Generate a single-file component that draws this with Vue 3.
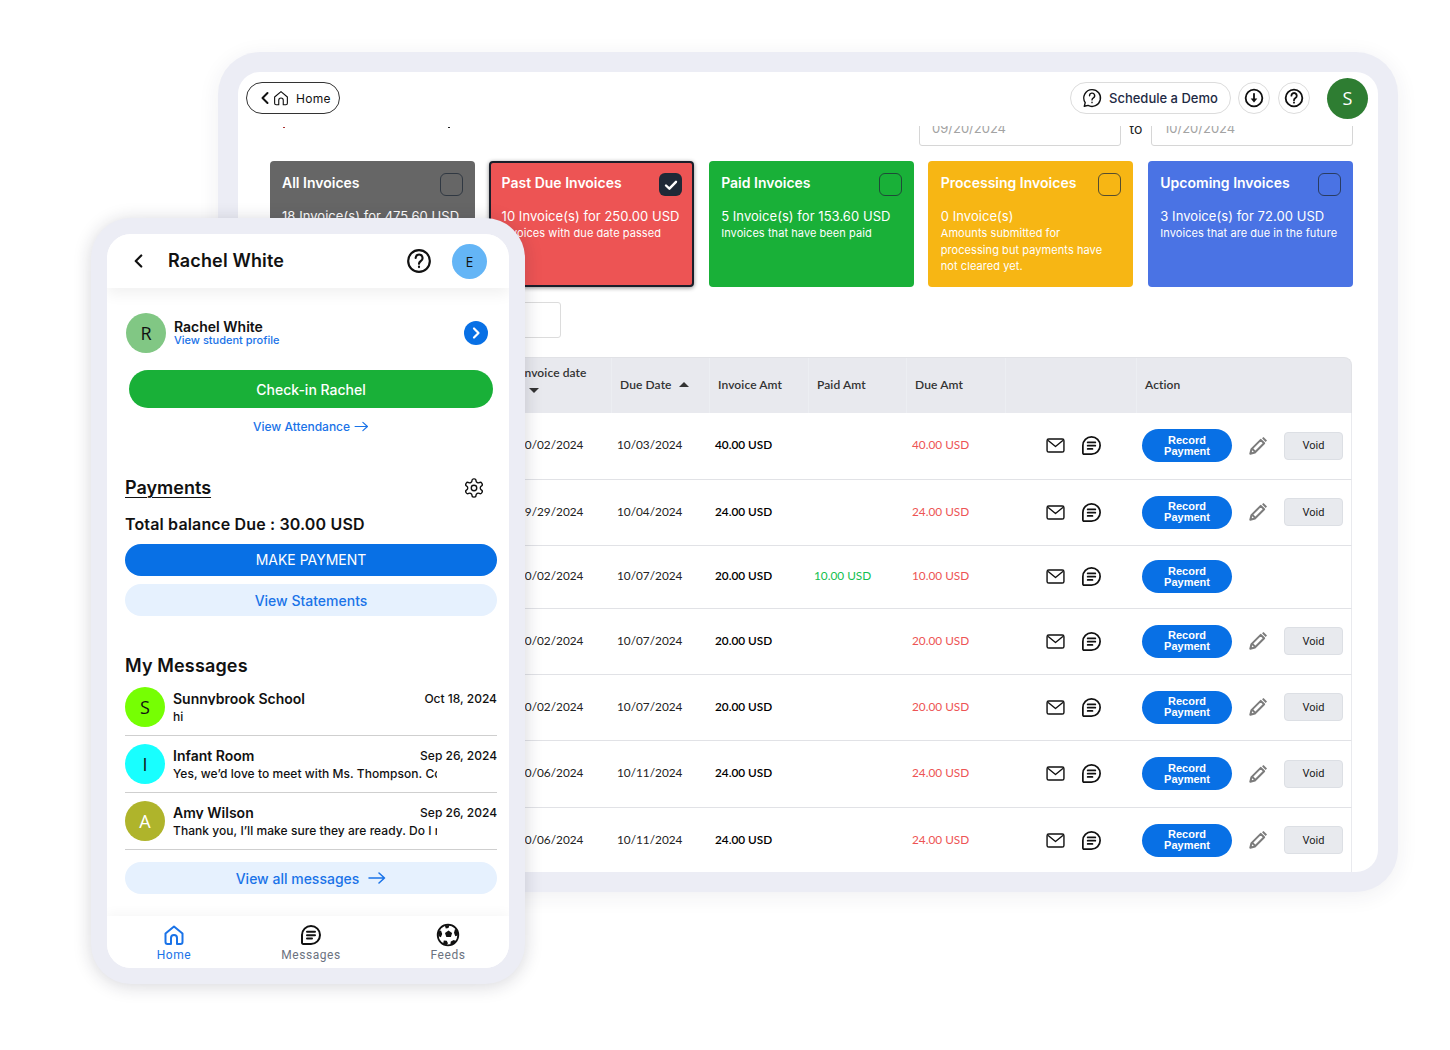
<script setup>
const cards = [
  { title: 'All Invoices', count: '18 Invoice(s) for 475.60 USD', sub: 'All invoices', color: 'c-grey' },
  { title: 'Past Due Invoices', count: '10 Invoice(s) for 250.00 USD', sub: 'Invoices with due date passed', color: 'c-red', checked: true },
  { title: 'Paid Invoices', count: '5 Invoice(s) for 153.60 USD', sub: 'Invoices that have been paid', color: 'c-green' },
  { title: 'Processing Invoices', count: '0 Invoice(s)', sub: 'Amounts submitted for processing but payments have not cleared yet.', color: 'c-yellow' },
  { title: 'Upcoming Invoices', count: '3 Invoice(s) for 72.00 USD', sub: 'Invoices that are due in the future', color: 'c-blue' }
]
const rows = [
  { inv: '10/02/2024', due: '10/03/2024', amt: '40.00 USD', paid: '', bal: '40.00 USD', h: 66.5, edit: true },
  { inv: '09/29/2024', due: '10/04/2024', amt: '24.00 USD', paid: '', bal: '24.00 USD', h: 66, edit: true },
  { inv: '10/02/2024', due: '10/07/2024', amt: '20.00 USD', paid: '10.00 USD', bal: '10.00 USD', h: 63.5, edit: false },
  { inv: '10/02/2024', due: '10/07/2024', amt: '20.00 USD', paid: '', bal: '20.00 USD', h: 65.5, edit: true },
  { inv: '10/02/2024', due: '10/07/2024', amt: '20.00 USD', paid: '', bal: '20.00 USD', h: 66.5, edit: true },
  { inv: '10/06/2024', due: '10/11/2024', amt: '24.00 USD', paid: '', bal: '24.00 USD', h: 66.5, edit: true },
  { inv: '10/06/2024', due: '10/11/2024', amt: '24.00 USD', paid: '', bal: '24.00 USD', h: 66, edit: true }
]
const messages = [
  { letter: 'S', color: 'a-lime', name: 'Sunnybrook School', date: 'Oct 18, 2024', text: 'hi' },
  { letter: 'I', color: 'a-cyan', name: 'Infant Room', date: 'Sep 26, 2024', text: 'Yes, we’d love to meet with Ms. Thompson. Could we set a time?' },
  { letter: 'A', color: 'a-olive', name: 'Amy Wilson', date: 'Sep 26, 2024', text: 'Thank you, I’ll make sure they are ready. Do I need to bring anything?' }
]
</script>

<template>
  <div class="page">
    <svg class="sprite" width="0" height="0" aria-hidden="true">
      <symbol id="i-chat" viewBox="0 0 24 24">
        <path d="M12 3a9 9 0 1 1 0 18H4.200A1.200 1.200 0 0 1 3 19.800V12a9 9 0 0 1 9-9z" />
        <path d="M8 8.800h8M8 12.200h8M8 15.600h5" />
      </symbol>
      <symbol id="i-mail" viewBox="0 0 20 16">
        <rect x="1" y="1" width="18" height="14" rx="1.800" />
        <path d="M2.500 3l7.500 6 7.500-6" />
      </symbol>
      <symbol id="i-pencil" viewBox="0 0 24 24">
        <path d="M3.600 20.400l1.300-5L15 5.300l3.700 3.700L8.600 19.100z" />
        <path d="M17.200 2.900l3.900 3.900" />
        <path d="M5.600 15l3.400 3.400" />
      </symbol>
      <symbol id="i-help" viewBox="0 0 24 24">
        <circle cx="12" cy="12" r="10" />
        <path d="M8.900 9.200a3.200 3.200 0 1 1 4.800 2.800c-1.100.7-1.700 1.300-1.700 2.600" />
        <path d="M12 17.200v.4" />
      </symbol>
      <symbol id="i-home" viewBox="0 0 24 24">
        <path d="M3.500 10.600L12 3.500l8.500 7.100V19a2 2 0 0 1-2 2H15v-6a3 3 0 0 0-6 0v6H5.500a2 2 0 0 1-2-2z" />
      </symbol>
    </svg>

    <section class="tablet">
      <div class="tablet-in">
        <header class="topbar">
          <button class="home-pill">
            <svg class="ic-back" viewBox="0 0 10 14"><path d="M7.500 2L2.500 7l5 5" /></svg>
            <svg class="ic-home line"><use href="#i-home" /></svg>
            <span>Home</span>
          </button>
          <div class="top-right">
            <button class="demo">
              <svg class="ic-demo" viewBox="0 0 24 24">
                <path d="M12 2.800a9.200 9.200 0 1 1-4.300 17.300L3.600 21l1-3.900A9.200 9.200 0 0 1 12 2.800z" />
                <path d="M9.300 9.500a2.800 2.800 0 1 1 4.200 2.400c-1 .6-1.500 1.100-1.500 2.200M12 16.700v.4" />
              </svg>
              <span>Schedule a Demo</span>
            </button>
            <button class="round">
              <svg class="ic-round" viewBox="0 0 24 24">
                <circle cx="12" cy="12" r="10" />
                <path d="M12 7v7" />
                <path class="solid" d="M8 12.500h8L12 17.500z" />
              </svg>
            </button>
            <button class="round">
              <svg class="ic-round line"><use href="#i-help" /></svg>
            </button>
            <div class="avatar-s">S</div>
          </div>
        </header>

        <div class="scroll">
          <div class="date-row">
            <i class="mark m1"></i><i class="mark m2"></i>
            <span class="spacer"></span>
            <div class="date-in">09/20/2024</div>
            <span class="to">to</span>
            <div class="date-in">10/20/2024</div>
          </div>

          <div class="cards">
            <article v-for="c in cards" :key="c.title" class="card" :class="[c.color, { selected: c.checked }]">
              <div class="card-head">
                <h3>{{ c.title }}</h3>
                <span class="check" :class="{ on: c.checked }">
                  <svg v-if="c.checked" viewBox="0 0 16 16"><path d="M3 8.500l3.400 3.200L13 4.800" /></svg>
                </span>
              </div>
              <p class="count">{{ c.count }}</p>
              <p class="sub">{{ c.sub }}</p>
            </article>
          </div>

          <div class="search"></div>

          <div class="table">
            <div class="tr thead">
              <div class="th"></div>
              <div class="th th-inv">Invoice date<i class="tri down"></i></div>
              <div class="th">Due Date<i class="tri up"></i></div>
              <div class="th">Invoice Amt</div>
              <div class="th">Paid Amt</div>
              <div class="th">Due Amt</div>
              <div class="th"></div>
              <div class="th">Action</div>
            </div>
            <div v-for="(r, i) in rows" :key="i" class="tr row" :style="{ height: r.h + 'px' }">
              <div class="td"></div>
              <div class="td">{{ r.inv }}</div>
              <div class="td">{{ r.due }}</div>
              <div class="td amt">{{ r.amt }}</div>
              <div class="td paid">{{ r.paid }}</div>
              <div class="td bal">{{ r.bal }}</div>
              <div class="td icons">
                <svg class="ic-mail line"><use href="#i-mail" /></svg>
                <svg class="ic-chat line"><use href="#i-chat" /></svg>
              </div>
              <div class="td actions">
                <button class="record">Record Payment</button>
                <template v-if="r.edit">
                  <svg class="ic-pencil"><use href="#i-pencil" /></svg>
                  <button class="void">Void</button>
                </template>
              </div>
            </div>
          </div>
        </div>
      </div>
    </section>

    <section class="phone">
      <div class="phone-in">
        <header class="p-head">
          <svg class="p-back" viewBox="0 0 10 14"><path d="M7.500 2L2.500 7l5 5" /></svg>
          <h1>Rachel White</h1>
          <svg class="p-help line"><use href="#i-help" /></svg>
          <div class="avatar-e">E</div>
        </header>

        <div class="student">
          <div class="avatar-r">R</div>
          <div class="student-txt">
            <strong>Rachel White</strong>
            <a>View student profile</a>
          </div>
          <span class="go">
            <svg viewBox="0 0 10 14"><path d="M3 2.500L7.500 7 3 11.500" /></svg>
          </span>
        </div>

        <button class="checkin">Check-in Rachel</button>
        <a class="attendance">View Attendance
          <svg class="arrow" viewBox="0 0 16 12"><path d="M1 6h13.500M9.500 1.500L14.500 6l-5 4.500" /></svg>
        </a>

        <div class="pay-head">
          <h2 class="payments">Payments</h2>
          <svg class="gear" viewBox="0 0 24 24">
            <path d="M12.220 2h-.440a2 2 0 0 0-2 2v.180a2 2 0 0 1-1 1.730l-.430.250a2 2 0 0 1-2 0l-.150-.080a2 2 0 0 0-2.730.730l-.220.380a2 2 0 0 0 .730 2.730l.150.100a2 2 0 0 1 1 1.720v.510a2 2 0 0 1-1 1.740l-.150.090a2 2 0 0 0-.730 2.730l.220.380a2 2 0 0 0 2.730.730l.150-.080a2 2 0 0 1 2 0l.430.250a2 2 0 0 1 1 1.730V20a2 2 0 0 0 2 2h.440a2 2 0 0 0 2-2v-.180a2 2 0 0 1 1-1.730l.430-.250a2 2 0 0 1 2 0l.150.080a2 2 0 0 0 2.730-.730l.220-.390a2 2 0 0 0-.730-2.730l-.150-.080a2 2 0 0 1-1-1.740v-.500a2 2 0 0 1 1-1.740l.150-.090a2 2 0 0 0 .730-2.730l-.220-.380a2 2 0 0 0-2.730-.730l-.150.080a2 2 0 0 1-2 0l-.430-.250a2 2 0 0 1-1-1.730V4a2 2 0 0 0-2-2z" />
            <circle cx="12" cy="12" r="3" />
          </svg>
        </div>
        <div class="total">Total balance Due : 30.00 USD</div>
        <button class="make">MAKE PAYMENT</button>
        <button class="soft statements">View Statements</button>

        <h2 class="msg-title">My Messages</h2>
        <div class="msgs">
          <div v-for="m in messages" :key="m.name" class="msg">
            <div class="m-av" :class="m.color">{{ m.letter }}</div>
            <div class="m-body">
              <div class="m-top">
                <span class="m-name">{{ m.name }}</span>
                <span class="m-date">{{ m.date }}</span>
              </div>
              <div class="m-text">{{ m.text }}</div>
            </div>
          </div>
        </div>
        <button class="soft allmsgs">View all messages
          <svg class="arrow big" viewBox="0 0 18 12"><path d="M1 6h15.500M11 1l5.500 5-5.500 5" /></svg>
        </button>

        <nav class="nav">
          <div class="nav-item active">
            <svg class="nav-ic line"><use href="#i-home" /></svg>
            <span>Home</span>
          </div>
          <div class="nav-item">
            <svg class="nav-ic line"><use href="#i-chat" /></svg>
            <span>Messages</span>
          </div>
          <div class="nav-item">
            <svg class="nav-ic ball" viewBox="0 0 24 24">
              <circle class="b-out" cx="12" cy="12" r="10.300" />
              <path class="b-in" d="M12.500 7.500l3.600 2.400-1.200 4.200H10.300L9 9.900z" />
              <path class="b-in" d="M8.800 2.500l4.700-.6-1 3.200-2.700.4zM2.300 13V8.600l2.700-1 1.200 3.300-1.300 3.300zM21.800 12.500V8l-2.800-2-1 3.700 1.300 3.500zM7 21l.8-3.500 2.900.3 1.300 2.500-1.500 1.600zM14.300 21.500l.5-2.900 3-1.500 2 .8-2.200 2.900z" />
            </svg>
            <span>Feeds</span>
          </div>
        </nav>
      </div>
    </section>
  </div>
</template>

<style scoped>
* { box-sizing: border-box; }
h1, h2, h3, p { margin: 0; }
button { font: inherit; cursor: pointer; }
.page {
  position: relative;
  width: 1450px;
  height: 1050px;
  background: #fff;
  overflow: hidden;
  font-family: Inter, "Liberation Sans", sans-serif;
  color: #111;
}
.sprite { position: absolute; }
.line { fill: none; stroke: currentColor; stroke-width: 2; stroke-linecap: round; stroke-linejoin: round; }

/* tablet window */
.tablet {
  position: absolute;
  left: 218px;
  top: 52px;
  width: 1180px;
  height: 840px;
  padding: 20px;
  background: #ecedf5;
  border-radius: 42px;
  box-shadow: 0 4px 22px rgba(40, 40, 70, .07);
}
.tablet-in {
  width: 100%;
  height: 100%;
  display: flex;
  flex-direction: column;
  background: #fff;
  border-radius: 22px;
  overflow: hidden;
}
.topbar {
  flex: 0 0 54px;
  display: flex;
  align-items: center;
  justify-content: space-between;
  padding: 0 10px 2px 8px;
}
.home-pill {
  display: flex;
  align-items: center;
  width: 94px;
  height: 32px;
  padding: 0 0 0 13px;
  background: #fff;
  color: #111;
  border: 1px solid #333;
  border-radius: 16px;
  font-size: 12px;
  font-weight: 400;
  letter-spacing: .3px;
}
.ic-back { width: 10px; height: 14px; fill: none; stroke: #111; stroke-width: 2; stroke-linecap: round; stroke-linejoin: round; }
.ic-home { width: 18px; height: 18px; margin: 0 6px 0 2px; stroke-width: 1.500; }
.top-right { display: flex; align-items: center; }
.demo {
  display: flex;
  align-items: center;
  width: 161px;
  height: 32px;
  padding: 0 0 0 10px;
  background: #fff;
  border: 1px solid #dcdcdc;
  border-radius: 16px;
  color: #1e2a44;
  font-size: 13px;
  font-weight: 500;
}
.ic-demo { width: 22px; height: 22px; margin-right: 6px; fill: none; stroke: #111; stroke-width: 1.500; stroke-linecap: round; stroke-linejoin: round; }
.round {
  display: flex;
  align-items: center;
  justify-content: center;
  width: 32px;
  height: 32px;
  margin-left: 8px;
  padding: 0;
  background: #fff;
  color: #111;
  border: 1px solid #dcdcdc;
  border-radius: 50%;
}
.demo + .round { margin-left: 7px; }
.ic-round { width: 20px; height: 20px; fill: none; stroke: #111; stroke-width: 2.200; stroke-linecap: round; }
.solid { fill: #111; stroke: none; }
.avatar-s {
  width: 41px;
  height: 41px;
  margin-left: 17px;
  border-radius: 50%;
  background: #2e7d32;
  color: #fff;
  font: 400 18px/41px "Open Sans", sans-serif;
  text-align: center;
}
.scroll {
  flex: 1;
  min-height: 0;
  overflow: hidden;
  padding: 0 25px 0 32px;
}
.date-row { display: flex; height: 20px; position: relative; }
.mark { width: 2px; height: 1px; margin-top: 1px; background: #222; flex: none; }
.m1 { margin-left: 13px; background: #a33; }
.m2 { margin-left: 163px; }
.spacer { flex: 1; }
.date-in {
  flex: none;
  width: 202px;
  height: 40px;
  margin-top: -20px;
  padding: 13px 0 0 12px;
  border: 1px solid #d6d6d6;
  border-radius: 3px;
  color: #a3a3a3;
  font-size: 13px;
  line-height: 17px;
}
.to { flex: none; width: 30px; margin-top: -6px; text-align: center; font-size: 14px; line-height: 17px; color: #222; }
.cards {
  display: grid;
  grid-template-columns: repeat(5, 1fr);
  gap: 14.400px;
  margin: 15px 0 0 -.5px;
}
.card {
  height: 126px;
  padding: 12px 12px 0 12.500px;
  border-radius: 4px;
  color: #fff;
}
.card-head { display: flex; justify-content: space-between; }
.card h3 { font-size: 14px; line-height: 20px; font-weight: 600; }
.check {
  flex: none;
  width: 23px;
  height: 23px;
  margin: 0 0 0 auto;
  border: 1.500px solid rgba(31, 41, 55, .75);
  border-radius: 6px;
  display: flex;
  align-items: center;
  justify-content: center;
}
.check.on { background: #1f2937; }
.check svg { width: 16px; height: 16px; fill: none; stroke: #fff; stroke-width: 2.400; stroke-linecap: round; stroke-linejoin: round; }
.count { margin-top: 12px; font-size: 13px; line-height: 17px; letter-spacing: .05px; white-space: nowrap; }
.sub { max-width: 178px; font-size: 11px; line-height: 16.500px; letter-spacing: .07px; }
.c-grey { background: #666; }
.c-red { background: #ed5454; }
.c-green { background: #19b038; }
.c-yellow { background: #f7b614; }
.c-blue { background: #4a73e4; }
.selected { border: 2px solid #1a1f2a; padding: 10px 10px 0 10.500px; box-shadow: 0 1px 4px rgba(0, 0, 0, .45); }
.search {
  width: 291px;
  height: 36px;
  margin-top: 15px;
  border: 1px solid #dcdcdc;
  border-radius: 3px;
}
.table {
  width: 1082px;
  margin-top: 19px;
  font-family: Lato, "Liberation Sans", sans-serif;
  font-size: 11.800px;
}
.tr {
  display: grid;
  grid-template-columns: 243px 99px 98px 99px 98px 99px 131px 215px;
}
.thead {
  height: 56px;
  padding-bottom: 2px;
  background: #e8e9ee;
  border-top: 1px solid #e1e2e6;
  border-top-right-radius: 8px;
  border-right: 1px solid #e1e2e6;
  overflow: hidden;
  font-size: 12px;
}
.th {
  display: flex;
  align-items: center;
  margin-bottom: -2px;
  padding: 0 0 2px 8px;
  border-right: 1px solid #eceef2;
  color: #333;
  font-weight: 600;
  letter-spacing: .1px;
}
.th:last-child { border-right: 0; }
.th-inv { display: block; padding: 8px 12px 0 8px; line-height: 14px; }
.tri { display: inline-block; width: 0; height: 0; border-left: 5px solid transparent; border-right: 5px solid transparent; }
.up { margin-left: 7px; border-bottom: 5px solid #333; }
.down { display: block; margin-top: 8px; border-top: 5px solid #333; margin-left: 8px; }
.row { border-bottom: 1px solid #e1e2e6; border-right: 1px solid #e9eaee; }
.td { display: flex; align-items: center; padding: 0 0 2px 5px; color: #222; }
.amt { color: #000; font-weight: 600; }
.paid { color: #12bf4e; }
.bal { color: #ed5454; }
.icons { padding: 0 0 0 40px; gap: 14.500px; color: #111; }
.ic-mail { flex: none; width: 19px; height: 15px; stroke-width: 1.500; }
.ic-chat { flex: none; width: 23px; height: 23px; stroke-width: 1.800; }
.actions { padding: 0 0 0 5px; }
.record {
  flex: none;
  width: 90px;
  height: 33px;
  padding: 0 18px;
  background: #0870e5;
  color: #fff;
  border: 0;
  border-radius: 17px;
  font: 700 11px/11px "Liberation Sans", sans-serif;
}
.ic-pencil {
  flex: none;
  width: 22px;
  height: 22px;
  margin-left: 15px;
  fill: none;
  stroke: #7c7c7c;
  stroke-width: 2.200;
  stroke-linejoin: round;
}
.void {
  flex: none;
  width: 59px;
  height: 28px;
  margin-left: 15px;
  padding: 0;
  background: #e8eaee;
  color: #222;
  border: 1px solid #dcdfe4;
  border-radius: 4px;
  font: 400 11px/1 Roboto, sans-serif;
}

/* phone window */
.phone {
  position: absolute;
  left: 91px;
  top: 218px;
  width: 434px;
  height: 766px;
  padding: 16px;
  background: #ecedf5;
  border-radius: 40px;
  box-shadow: 0 2px 18px rgba(30, 30, 50, .18);
}
.phone-in {
  width: 100%;
  height: 100%;
  background: #fff;
  border-radius: 24px;
  overflow: hidden;
}
.p-head {
  display: flex;
  align-items: center;
  height: 54px;
  padding-left: 26px;
  background: #fff;
  box-shadow: 0 6px 14px rgba(0, 0, 0, .06);
}
.p-back { width: 11px; height: 16px; fill: none; stroke: #111; stroke-width: 2; stroke-linecap: round; stroke-linejoin: round; }
.p-head h1 { margin-left: 24px; font-size: 18px; line-height: 24px; font-weight: 600; letter-spacing: .15px; }
.p-help { width: 26px; height: 26px; margin-left: auto; stroke-width: 2; }
.avatar-e {
  width: 35px;
  height: 35px;
  margin: 0 22px 0 20px;
  border-radius: 50%;
  background: #64b5f6;
  font: 400 14px/35px "Open Sans", sans-serif;
  color: #111;
  text-align: center;
}
.student {
  display: flex;
  align-items: center;
  height: 40px;
  margin-top: 25px;
  padding: 0 21px 0 19px;
}
.avatar-r {
  width: 40px;
  height: 40px;
  border-radius: 50%;
  background: #81c784;
  font: 400 18px/40px "Open Sans", sans-serif;
  text-align: center;
}
.student-txt { display: flex; flex-direction: column; margin-left: 8px; }
.student-txt strong { font-size: 14px; line-height: 14px; font-weight: 600; }
.student-txt a { font-size: 11px; line-height: 12px; font-weight: 500; color: #1a73e8; }
.go {
  display: flex;
  align-items: center;
  justify-content: center;
  width: 24px;
  height: 24px;
  margin-left: auto;
  border-radius: 50%;
  background: #0870e5;
}
.go svg { width: 10px; height: 14px; fill: none; stroke: #fff; stroke-width: 2.200; stroke-linecap: round; stroke-linejoin: round; }
.checkin {
  display: block;
  width: 364px;
  height: 38px;
  margin: 17px 0 0 22px;
  background: #19b038;
  color: #fff;
  border: 0;
  border-radius: 19px;
  font-size: 14px;
  font-weight: 500;
}
.attendance {
  display: flex;
  align-items: center;
  justify-content: center;
  gap: 4px;
  height: 18px;
  margin: 9px 0 0 6px;
  color: #1a73e8;
  font-size: 12px;
  font-weight: 500;
}
.arrow { width: 15px; height: 11px; fill: none; stroke: currentColor; stroke-width: 1.300; stroke-linecap: round; stroke-linejoin: round; }
.pay-head {
  display: flex;
  align-items: center;
  justify-content: space-between;
  height: 24px;
  margin-top: 41px;
  padding: 0 24px 0 18px;
}
.payments { font-size: 18px; line-height: 24px; font-weight: 600; text-decoration: underline; text-underline-offset: 3px; text-decoration-thickness: 1px; }
.gear { width: 22px; height: 22px; fill: none; stroke: #111; stroke-width: 1.500; stroke-linecap: round; stroke-linejoin: round; }
.total { margin: 12px 0 0 18px; font-size: 16px; line-height: 24px; font-weight: 600; letter-spacing: .15px; }
.make {
  display: block;
  width: 372px;
  height: 32px;
  margin: 8px 0 0 18px;
  background: #0870e5;
  color: #fff;
  border: 0;
  border-radius: 16px;
  font: 400 14px/1 Inter, sans-serif;
}
.soft {
  display: block;
  width: 372px;
  height: 32px;
  margin-left: 18px;
  background: #e6f1fe;
  color: #1a73e8;
  border: 0;
  border-radius: 16px;
  font-size: 14px;
  font-weight: 500;
}
.statements { margin-top: 8px; }
.msg-title { margin: 38px 0 0 18px; font-size: 18px; line-height: 24px; font-weight: 600; letter-spacing: .15px; }
.msgs { margin: 1px 12px 0 18px; }
.msg {
  display: flex;
  height: 57px;
  padding-top: 8px;
  border-bottom: 1px solid #cfcfcf;
}
.m-av {
  flex: none;
  width: 40px;
  height: 40px;
  border-radius: 50%;
  font: 400 18px/40px "Open Sans", sans-serif;
  text-align: center;
}
.a-lime { background: #76ff03; }
.a-cyan { background: #18ffff; }
.a-olive { background: #afb42b; color: #fff; }
.m-body { flex: 1; min-width: 0; margin-left: 8px; padding-top: 5px; }
.m-top { display: flex; justify-content: space-between; align-items: flex-start; height: 13px; overflow: hidden; }
.m-name { font-size: 14px; line-height: 13px; font-weight: 600; }
.m-date { font-size: 12px; line-height: 13px; font-weight: 500; }
.m-text {
  width: 264px;
  margin-top: 4px;
  overflow: hidden;
  white-space: nowrap;
  font-size: 12px;
  line-height: 16px;
  font-weight: 500;
  letter-spacing: .05px;
}
.allmsgs {
  display: flex;
  align-items: center;
  justify-content: center;
  gap: 9px;
  margin-top: 12px;
}
.big { width: 18px; height: 12px; stroke-width: 1.500; }
.nav {
  display: grid;
  grid-template-columns: 134px 140px 134px;
  height: 52px;
  margin-top: 22px;
  background: #fff;
  box-shadow: 0 -4px 10px rgba(0, 0, 0, .03);
}
.nav-item {
  display: flex;
  flex-direction: column;
  align-items: center;
  padding-top: 7px;
  color: #6b7280;
  font-family: Roboto, sans-serif;
  font-size: 12px;
  line-height: 16px;
  letter-spacing: .55px;
}
.nav-item.active { color: #1a73e8; }
.nav-item:not(.active) .nav-ic { color: #111; }
.nav-ic { width: 24px; height: 24px; }
.b-out { fill: #fff; stroke: #111; stroke-width: 1.800; }
.b-in { fill: #111; }
</style>
